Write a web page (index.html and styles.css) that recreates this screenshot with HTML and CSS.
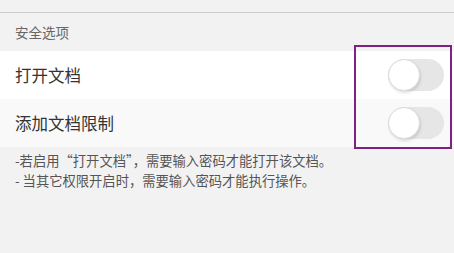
FILE: index.html
```html
<!DOCTYPE html>
<html lang="zh-CN">
<head>
<meta charset="utf-8">
<link rel="stylesheet" href="styles.css">
</head>
<body>
<div class="page">
  <div class="topbar"></div>
  <div class="section-title">安全选项</div>
  <div class="row row-first">
    <span class="label">打开文档</span>
    <span class="toggle"><span class="knob"></span></span>
  </div>
  <div class="row row-second">
    <span class="label">添加文档限制</span>
    <span class="toggle"><span class="knob"></span></span>
  </div>
  <div class="notes">
    <p class="note">-若启用“打开文档”，需要输入密码才能打开该文档。</p>
    <p class="note">- 当其它权限开启时，需要输入密码才能执行操作。</p>
  </div>
  <div class="highlight"></div>
</div>
</body>
</html>
```

FILE: styles.css
```css
html, body {
  margin: 0;
  padding: 0;
  background: #f2f2f2;
}
.page {
  position: relative;
  width: 454px;
  height: 253px;
  overflow: hidden;
  font-family: "Noto Sans CJK SC", "Noto Sans", sans-serif;
  background: #f2f2f2;
}
.topbar {
  height: 12px;
  border-bottom: 1px solid #cdcdcd;
}
.section-title {
  height: 38px;
  display: flex;
  align-items: center;
  padding-left: 15px;
  font-size: 13.5px;
  color: #666;
}
.row {
  height: 48px;
  display: flex;
  align-items: center;
  justify-content: space-between;
  padding: 0 10px 0 15px;
}
.row-first {
  background: #ffffff;
}
.row-second {
  background: #f9f9f9;
}
.label {
  font-size: 16.5px;
  color: #333;
}
.toggle {
  position: relative;
  width: 56px;
  height: 32px;
  border-radius: 16px;
  background: #e6e6e6;
}
.knob {
  position: absolute;
  left: 0;
  top: 0;
  width: 30px;
  height: 30px;
  border-radius: 50%;
  background: #fff;
  border: 1px solid #dcdcdc;
  box-shadow: 1px 2px 3px rgba(0,0,0,0.12);
}
.notes {
  padding: 4px 15px 0 15px;
}
.note {
  margin: 0;
  font-size: 13.3px;
  line-height: 19.5px;
  color: #555;
  white-space: nowrap;
}
.highlight {
  position: absolute;
  left: 354px;
  top: 45px;
  width: 94px;
  height: 100px;
  border: 2px solid #7d2280;
}
```
